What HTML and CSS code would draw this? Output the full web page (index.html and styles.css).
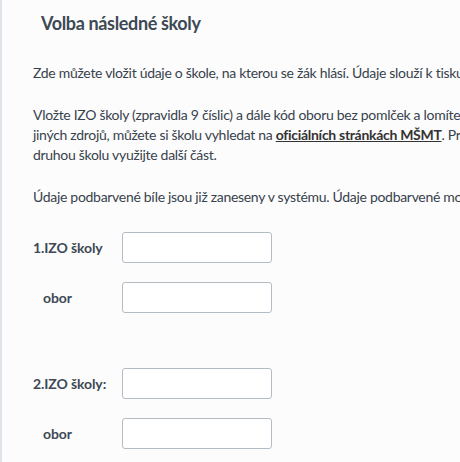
FILE: index.html
```html
<!DOCTYPE html>
<html lang="cs">
<head>
  <meta charset="UTF-8" />
  <title>Volba následné školy</title>
  <link rel="stylesheet" href="styles.css">
</head>
<body>

<div class="panel">
  <h2 class="title">Volba následné školy</h2>

  <p>Zde můžete vložit údaje o škole, na kterou se žák hlásí. Údaje slouží k tisku přihlášky.</p>

  <p>Vložte IZO školy (zpravidla 9 číslic) a dále kód oboru bez pomlček a lomítek. Pokud IZO neznáte z<br>
    jiných zdrojů, můžete si školu vyhledat na <a href="#">oficiálních stránkách MŠMT</a>. Pro<br>
    druhou školu využijte další část.</p>

  <p>Údaje podbarvené bíle jsou již zaneseny v systému. Údaje podbarvené modře lze upravit.</p>

  <div class="school">
    <div class="row">
      <label class="label">1.IZO školy</label>
      <input type="text" class="field" />
    </div>
    <div class="row">
      <label class="label sub">obor</label>
      <input type="text" class="field" />
    </div>
  </div>

  <div class="school">
    <div class="row">
      <label class="label">2.IZO školy:</label>
      <input type="text" class="field" />
    </div>
    <div class="row">
      <label class="label sub">obor</label>
      <input type="text" class="field" />
    </div>
  </div>
</div>

</body>
</html>
```

FILE: styles.css
```css
body {
  margin: 0;
  font-family: Lato, "Open Sans", sans-serif;
  font-size: 14px;
  letter-spacing: -0.3px;
  color: #37424d;
  background: #fcfcfc;
  overflow: hidden;
}

.panel {
  border-left: 2px solid #dfe4ea;
  padding: 10px 0 0 31px;
  width: 700px;
  min-height: 462px;
}

.title {
  margin: 0 0 27px 8px;
  font-size: 18px;
  font-weight: 700;
  color: #3d4954;
  line-height: 26px;
  letter-spacing: -0.35px;
}

p {
  margin: 0 0 22px 0;
  line-height: 20px;
  white-space: nowrap;
}

p a {
  color: #333;
  font-weight: 700;
}

.school {
  padding-top: 3px;
  margin-bottom: 52px;
}

.row {
  display: flex;
  align-items: center;
  height: 31px;
  margin-bottom: 19px;
}

.label {
  width: 89px;
  font-weight: 700;
  color: #3d4954;
  letter-spacing: -0.1px;
}

.label.sub {
  padding-left: 10px;
  width: 79px;
}

.field {
  width: 150px;
  height: 31px;
  box-sizing: border-box;
  border: 1px solid #b3bcc3;
  border-radius: 3px;
  background: #fff;
}
```
